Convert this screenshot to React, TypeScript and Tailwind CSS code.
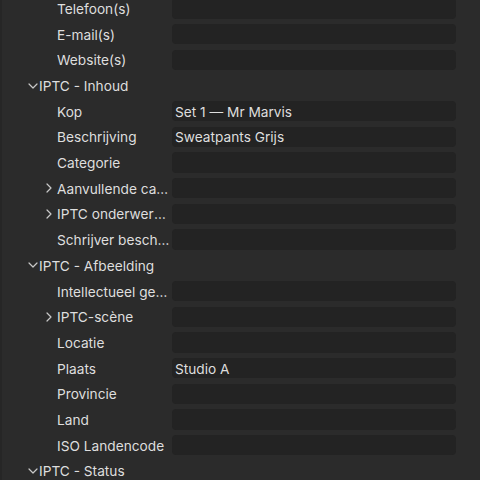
import React from "react";

type Row =
  | { kind: "section"; label: string }
  | { kind: "field"; label: string; value?: string; expandable?: boolean };

const rows: Row[] = [
  { kind: "field", label: "Telefoon(s)" },
  { kind: "field", label: "E-mail(s)" },
  { kind: "field", label: "Website(s)" },
  { kind: "section", label: "IPTC - Inhoud" },
  { kind: "field", label: "Kop", value: "Set 1 — Mr Marvis" },
  { kind: "field", label: "Beschrijving", value: "Sweatpants Grijs" },
  { kind: "field", label: "Categorie" },
  { kind: "field", label: "Aanvullende categorieën", expandable: true },
  { kind: "field", label: "IPTC onderwerpcode", expandable: true },
  { kind: "field", label: "Schrijver beschrijving" },
  { kind: "section", label: "IPTC - Afbeelding" },
  { kind: "field", label: "Intellectueel genre" },
  { kind: "field", label: "IPTC-scène", expandable: true },
  { kind: "field", label: "Locatie" },
  { kind: "field", label: "Plaats", value: "Studio A" },
  { kind: "field", label: "Provincie" },
  { kind: "field", label: "Land" },
  { kind: "field", label: "ISO Landencode" },
  { kind: "section", label: "IPTC - Status" },
];

function ChevronDown() {
  return (
    <svg width="10" height="6" viewBox="0 0 10 6" className="shrink-0">
      <path d="M1 1 L5 5 L9 1" fill="none" stroke="#c8c8c8" strokeWidth="1.2" strokeLinecap="round" strokeLinejoin="round" />
    </svg>
  );
}

function ChevronRight() {
  return (
    <svg width="6" height="10" viewBox="0 0 6 10" className="shrink-0">
      <path d="M1 1 L5 5 L1 9" fill="none" stroke="#c8c8c8" strokeWidth="1.2" strokeLinecap="round" strokeLinejoin="round" />
    </svg>
  );
}

export default function App() {
  return (
    <div
      className="w-[480px] h-[480px] overflow-hidden bg-[#2b2b2b] border-l-2 border-[#262626] text-[#dedede] text-[13.7px]"
      style={{ fontFamily: "Inter, 'Noto Sans', sans-serif" }}
    >
      <div className="flex flex-col mt-[-4.4px]">
        {rows.map((r, i) =>
          r.kind === "section" ? (
            <div key={i} className="h-[25.7px] flex items-center">
              <div className="w-[37px] flex justify-end pr-[1px]">
                <ChevronDown />
              </div>
              <span className="leading-[18px] pt-[1px]">{r.label}</span>
            </div>
          ) : (
            <div key={i} className="h-[25.7px] flex items-center">
              <div className="w-[170px] flex items-center shrink-0">
                <div className="w-[55px] flex justify-end pr-[5px]">
                  {r.expandable ? <ChevronRight /> : null}
                </div>
                <span className="truncate min-w-0 flex-1 leading-[18px] pt-[1px] pr-[1px]">{r.label}</span>
              </div>
              <div className="w-[284px] h-[20.3px] rounded-[4px] bg-[#232323] flex items-center pl-[3px] shrink-0">
                {r.value ? <span className="leading-[18px] pt-[1px]">{r.value}</span> : null}
              </div>
            </div>
          )
        )}
      </div>
    </div>
  );
}
